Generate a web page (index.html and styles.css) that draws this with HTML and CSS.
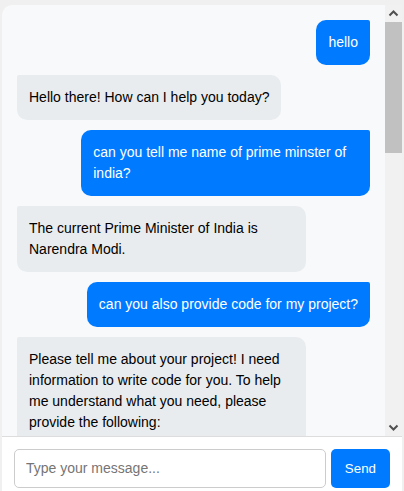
FILE: index.html
```html
<!DOCTYPE html>
<html lang="en">
<head>
<meta charset="utf-8">
<title>Chat</title>
<link rel="stylesheet" href="styles.css">
</head>
<body>
<div class="chat-container">
  <div class="chat-body">
    <div class="chat-messages">
      <div class="message user">hello</div>
      <div class="message bot">Hello there! How can I help you today?</div>
      <div class="message user">can you tell me name of prime minster of india?</div>
      <div class="message bot">The current Prime Minister of India is Narendra Modi.</div>
      <div class="message user">can you also provide code for my project?</div>
      <div class="message bot">Please tell me about your project! I need information to write code for you. To help me understand what you need, please provide the following:</div>
    </div>
    <div class="scrollbar" aria-hidden="true">
      <div class="sb-btn">
        <svg width="17" height="17" viewBox="0 0 17 17"><path d="M4.5 10.5 L8.5 6.5 L12.5 10.5" fill="none" stroke="#505050" stroke-width="2"/></svg>
      </div>
      <div class="sb-track">
        <div class="sb-thumb"></div>
      </div>
      <div class="sb-btn">
        <svg width="17" height="17" viewBox="0 0 17 17"><path d="M4.5 6.5 L8.5 10.5 L12.5 6.5" fill="none" stroke="#505050" stroke-width="2"/></svg>
      </div>
    </div>
  </div>
  <div class="chat-input">
    <input class="chat-field" type="text" placeholder="Type your message...">
    <button class="send-btn" type="button">Send</button>
  </div>
</div>
</body>
</html>
```

FILE: styles.css
```css
html, body {
  margin: 0;
  padding: 0;
  height: 100%;
  overflow: hidden;
}

body {
  background: #f0f0f0;
  font-family: "Liberation Sans", Arial, sans-serif;
}

.chat-container {
  width: 400px;
  height: 495px;
  margin: 5px auto 0;
  background: #f8f9fa;
  border-radius: 10px;
  display: flex;
  flex-direction: column;
}

.chat-body {
  flex: 1;
  min-height: 0;
  display: flex;
}

.chat-messages {
  flex: 1;
  min-width: 0;
  overflow: hidden;
  padding: 15px;
  display: flex;
  flex-direction: column;
  gap: 10px;
}

.scrollbar {
  width: 17px;
  flex-shrink: 0;
  display: flex;
  flex-direction: column;
  background: #f1f1f1;
}

.sb-btn {
  height: 17px;
  flex-shrink: 0;
  display: flex;
}

.sb-track {
  flex: 1;
}

.sb-thumb {
  height: 131px;
  background: #c1c1c1;
}

.message {
  max-width: 75%;
  padding: 12px;
  font-size: 14px;
  line-height: 21px;
  flex-shrink: 0;
}

.message.user {
  align-self: flex-end;
  background: #007bff;
  color: #ffffff;
  border-radius: 10px 2px 10px 10px;
}

.message.bot {
  align-self: flex-start;
  background: #e9ecef;
  color: #000000;
  border-radius: 2px 10px 10px 10px;
}

.chat-input {
  display: flex;
  gap: 5px;
  padding: 12px;
  background: #ffffff;
  border-top: 1px solid #dddddd;
  border-radius: 0 0 10px 10px;
}

.chat-field {
  flex: 1;
  min-width: 0;
  margin: 0;
  padding: 10px 11px;
  font-family: "Liberation Sans", Arial, sans-serif;
  font-size: 14px;
  line-height: 17px;
  border: 1px solid #cccccc;
  border-radius: 5px;
  outline: none;
  color: #000000;
}

.chat-field::placeholder {
  color: #757575;
}

.send-btn {
  margin: 0;
  padding: 0 14px;
  font-family: "Liberation Sans", Arial, sans-serif;
  font-size: 13.333px;
  background: #007bff;
  color: #ffffff;
  border: none;
  border-radius: 5px;
}
```
